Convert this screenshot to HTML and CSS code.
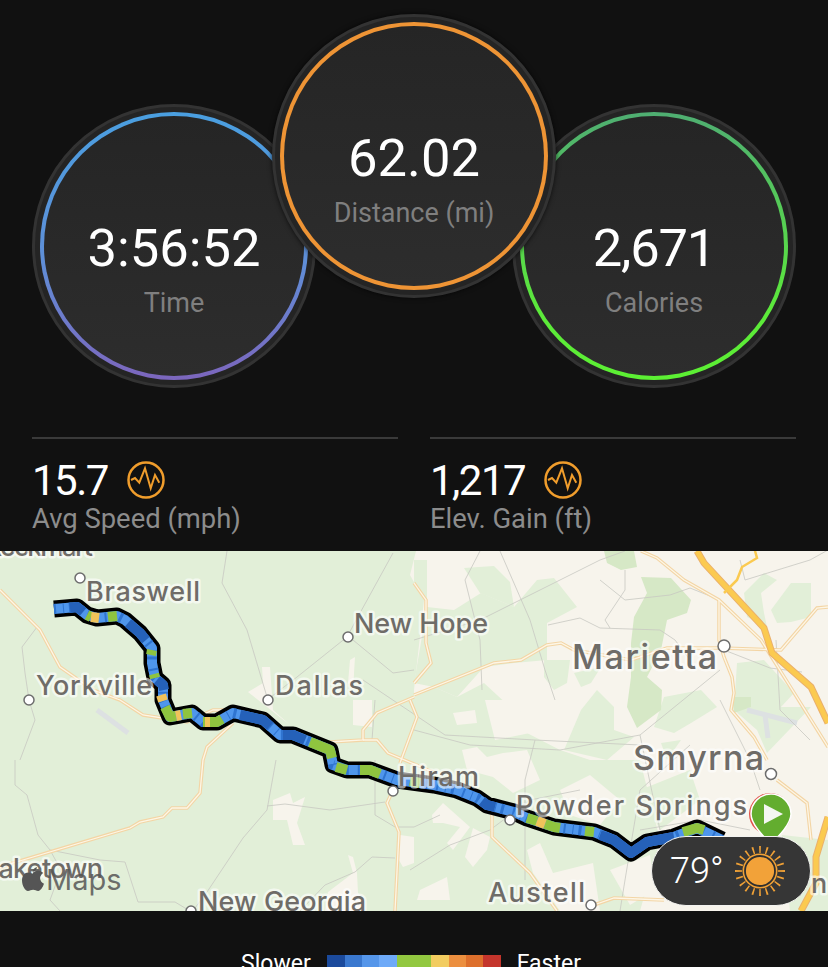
FILE: index.html
```html
<!DOCTYPE html>
<html lang="en">

<head>
    <meta charset="UTF-8">
    <meta name="viewport" content="width=device-width, initial-scale=1.0">
    <title>Ride Summary</title>
    <link rel="stylesheet" href="styles.css">
</head>

<body>
    <div class="gauges">
        <div class="gauge gauge-side">
            <div class="gauge-ring ring-time">
                <div class="gauge-inner">
                    <div class="gauge-value">3:56:52</div>
                    <div class="gauge-label">Time</div>
                </div>
            </div>
        </div>
        <div class="gauge gauge-main">
            <div class="gauge-ring ring-distance">
                <div class="gauge-inner">
                    <div class="gauge-value">62.02</div>
                    <div class="gauge-label">Distance (mi)</div>
                </div>
            </div>
        </div>
        <div class="gauge gauge-side">
            <div class="gauge-ring ring-calories">
                <div class="gauge-inner">
                    <div class="gauge-value value-tight">2,671</div>
                    <div class="gauge-label">Calories</div>
                </div>
            </div>
        </div>
    </div>

    <div class="stats">
        <div class="stat">
            <div class="stat-row">
                <span class="stat-value">15.7</span>
                <svg class="pulse" viewBox="0 0 38 38">
                    <circle cx="19" cy="19" r="17.5"></circle>
                    <polyline points="4,19 8,17 12.3,21.7 18,7.3 23.7,27.3 28,14 32.3,21.7"></polyline>
                </svg>
            </div>
            <div class="stat-label">Avg Speed (mph)</div>
        </div>
        <div class="stat">
            <div class="stat-row">
                <span class="stat-value">1,217</span>
                <svg class="pulse" viewBox="0 0 38 38">
                    <circle cx="19" cy="19" r="17.5"></circle>
                    <polyline points="4,19 8,17 12.3,21.7 18,7.3 23.7,27.3 28,14 32.3,21.7"></polyline>
                </svg>
            </div>
            <div class="stat-label">Elev. Gain (ft)</div>
        </div>
    </div>

    <div class="map">
        <svg class="map-svg" viewBox="0 551 828 360">
            <!-- land -->
            <rect class="land" x="0" y="551" width="828" height="360"></rect>
            <polygon class="green" points="0,551 416,551 410,575 424,600 414,690 414,911 0,911"></polygon>
            <polygon class="green" points="414,560 427,560 427,603 414,590"></polygon>
            <polygon class="green" points="427,607 454,610 481,593 514,607 537,580 554,578 577,607 547,623 547,660 514,663 484,667 457,697 434,687 414,683"></polygon>
            <polygon class="green" points="464,568 494,566 510,582 514,607 480,593"></polygon>
            <polygon class="green" points="414,697 434,687 457,697 484,683 510,707 527,733 560,750 590,760 640,760 660,840 640,911 414,911"></polygon>
            <polygon class="green" points="544,660 570,660 567,683 554,690 544,677"></polygon>
            <polygon class="green" points="574,673 601,667 591,683 581,687"></polygon>
            <polygon class="green" points="597,690 614,707 614,730 634,737 607,760 564,750 581,710"></polygon>
            <polygon class="green" points="664,697 701,690 717,707 691,723 674,733 654,727"></polygon>
            <polygon class="green" points="661,743 681,740 667,760"></polygon>
            <polygon class="green" points="744,593 764,573 777,580 761,593 764,613 767,627 747,617"></polygon>
            <polygon class="green" points="771,610 791,583 811,583 811,617 791,622 777,623"></polygon>
            <polygon class="green" points="737,663 764,660 794,693 781,707 811,707 767,753 757,730 734,710"></polygon>
            <polygon class="green" points="782,835 828,840 828,911 790,911"></polygon>
            <polygon class="green" points="640,790 690,770 700,800 660,830"></polygon>

            <polygon class="cream" points="262,667 270,667 273,710 290,725 267,707 248,692 263,683"></polygon>
            <polygon class="cream" points="350,660 355,657 353,690 348,683"></polygon>
            <polygon class="cream" points="353,700 372,700 372,727 353,725"></polygon>
            <polygon class="cream" points="273,800 290,793 293,803 305,797 297,823 305,845 293,845 287,820 273,820"></polygon>
            <polygon class="cream" points="348,855 353,857 357,873 358,893 365,900 365,911 325,911 328,892 353,873"></polygon>
            <polygon class="cream" points="400,835 414,837 414,863 403,867 397,857"></polygon>
            <polygon class="cream" points="453,713 475,710 477,723 457,725"></polygon>
            <polygon class="cream" points="462,750 477,747 487,757 503,753 527,750 540,780 513,793 493,777 467,770"></polygon>
            <polygon class="cream" points="432,815 443,803 470,827 453,850 447,843 460,827 443,823 433,823"></polygon>
            <polygon class="cream" points="465,857 473,828 490,837 487,850 473,867"></polygon>
            <polygon class="cream" points="420,890 447,877 450,900 417,900"></polygon>
            <polygon class="cream" points="527,850 540,843 553,873 593,863 600,911 560,911 533,873"></polygon>
            <polygon class="cream" points="485,700 515,700 530,733 495,740"></polygon>
            <polygon class="cream" points="560,790 590,775 620,800 600,825 570,815"></polygon>
            <polygon class="cream" points="610,870 650,855 655,890 630,905"></polygon>

            <polygon class="park" points="634,617 647,593 641,577 671,578 691,600 687,613 667,620 661,650 647,677 662,690 661,710 637,728 627,707 631,677 631,643"></polygon>
            <polygon class="park" points="604,551 634,551 637,567 621,570 607,563"></polygon>
            <polygon class="park" points="732,697 751,697 751,707 734,713"></polygon>

            <line class="strip" x1="97" y1="710" x2="128" y2="733"></line>
            <line class="strip" x1="747" y1="710" x2="797" y2="723"></line>
            <line class="strip" x1="765" y1="715" x2="768" y2="738"></line>

            <!-- local roads -->
            <g class="lane">
                <polyline points="227,551 222,583 247,630 267,697"></polyline>
                <polyline points="393,553 360,613 347,637 297,677 267,700"></polyline>
                <polyline points="353,640 393,673 414,670"></polyline>
                <polyline points="37,627 22,647 25,673 29,700 35,720 20,760"></polyline>
                <polyline points="15,760 15,785 27,795 38,835 50,850 61,870 50,900 60,911"></polyline>
                <polyline points="50,850 100,860 125,862 138,902 175,902 190,911"></polyline>
                <polyline points="276,760 267,810 243,838 207,892 195,908"></polyline>
                <polyline points="267,806 285,804 330,810 385,802"></polyline>
                <polyline points="375,760 375,815 395,827 414,827 440,815"></polyline>
                <polyline points="375,700 372,740"></polyline>
                <polyline points="363,680 445,735 535,740 640,745"></polyline>
                <polyline points="535,740 525,780 525,880"></polyline>
                <polyline points="300,911 325,885 355,872 372,857 395,858"></polyline>
                <polyline points="414,640 480,620 540,590 600,560 625,551"></polyline>
                <polyline points="500,551 530,620 545,670 555,700"></polyline>
                <polyline points="480,551 465,580 470,600 480,640 482,690"></polyline>
                <polyline points="548,625 580,618 600,628 660,630 675,640 690,660"></polyline>
                <polyline points="600,580 625,600 670,595 690,588 720,600"></polyline>
                <polyline points="610,628 605,620 625,590 625,570"></polyline>
                <polyline points="414,730 470,745 560,750 640,735 720,670"></polyline>
                <polyline points="640,735 660,830"></polyline>
                <polyline points="690,745 640,790 625,880 620,911"></polyline>
                <polyline points="720,700 750,760 760,790"></polyline>
                <polyline points="724,650 770,668 802,672"></polyline>
                <polyline points="740,560 745,580 810,560 828,550"></polyline>
                <polyline points="776,640 780,710 810,740"></polyline>
                <polyline points="640,830 700,820 750,830"></polyline>
                <polyline points="410,870 450,845 490,830 530,800 580,790"></polyline>
            </g>

            <!-- main roads -->
            <g class="road-edge">
                <polyline points="0,590 40,630 60,667 93,690 120,700 143,715 187,722 213,710 233,710"></polyline>
                <polyline points="233,723 207,747 203,760 200,793 187,808 172,808 163,817 140,822 130,828 13,863 0,868"></polyline>
                <polyline points="414,697 377,713 363,730 363,740 330,742"></polyline>
                <polyline points="363,740 377,740 388,753 433,772"></polyline>
                <polyline points="410,700 417,717 400,763"></polyline>
                <polyline points="393,790 387,803 399,832 395,911"></polyline>
                <polyline points="492,810 492,837 530,873 557,911"></polyline>
                <polyline points="414,583 426,600 426,643 431,663 414,683"></polyline>
                <polyline points="414,695 494,663 521,660 547,645 561,643 574,650 631,660 667,648 721,648 781,650 817,608 828,607"></polyline>
                <polyline points="641,551 657,558 684,580 719,600 761,640 828,747"></polyline>
                <polyline points="719,600 719,640 724,657 732,677 734,693 731,710 754,737 767,760"></polyline>
                <polyline points="777,780 807,803 811,840"></polyline>
                <polyline points="591,906 614,898 664,900"></polyline>
            </g>
            <g class="road-fill">
                <polyline points="0,590 40,630 60,667 93,690 120,700 143,715 187,722 213,710 233,710"></polyline>
                <polyline points="233,723 207,747 203,760 200,793 187,808 172,808 163,817 140,822 130,828 13,863 0,868"></polyline>
                <polyline points="414,697 377,713 363,730 363,740 330,742"></polyline>
                <polyline points="363,740 377,740 388,753 433,772"></polyline>
                <polyline points="410,700 417,717 400,763"></polyline>
                <polyline points="393,790 387,803 399,832 395,911"></polyline>
                <polyline points="492,810 492,837 530,873 557,911"></polyline>
                <polyline points="414,583 426,600 426,643 431,663 414,683"></polyline>
                <polyline points="414,695 494,663 521,660 547,645 561,643 574,650 631,660 667,648 721,648 781,650 817,608 828,607"></polyline>
                <polyline points="641,551 657,558 684,580 719,600 761,640 828,747"></polyline>
                <polyline points="719,600 719,640 724,657 732,677 734,693 731,710 754,737 767,760"></polyline>
                <polyline points="777,780 807,803 811,840"></polyline>
                <polyline points="591,906 614,898 664,900"></polyline>
            </g>

            <!-- highway -->
            <g class="highway-edge">
                <polyline points="697,551 704,563 764,628 772,653 811,687 828,723"></polyline>
                <polyline points="828,817 816,857 816,883 801,911"></polyline>
            </g>
            <g class="highway-fill">
                <polyline points="697,551 704,563 764,628 772,653 811,687 828,723"></polyline>
                <polyline points="828,817 816,857 816,883 801,911"></polyline>
                <polyline class="ramp" points="724,593 737,580 742,567 757,558 755,551"></polyline>
            </g>

            <!-- route -->
            <polyline class="route-line" points="54,609 77,607 87,615 97,618 117,616 125,620 140,633 152,648 152,663 155,678 163,685 163,700 170,717 192,713 203,722 217,722 233,713 263,720 280,735 293,735 330,750 333,765 347,770 370,770 397,780 434,785 457,790 477,798 487,805 514,812 527,818 554,827 594,832 614,840 631,853 647,842 674,837 697,828 722,840"></polyline>
            <polyline class="route-blue" points="54,609 77,607 87,615 97,618 117,616 125,620 140,633 152,648 152,663 155,678 163,685 163,700 170,717 192,713 203,722 217,722 233,713 263,720 280,735 293,735 330,750 333,765 347,770 370,770 397,780 434,785 457,790 477,798 487,805 514,812 527,818 554,827 594,832 614,840 631,853 647,842 674,837 697,828 722,840"></polyline>
            <polyline class="route-bands" points="54,609 77,607 87,615 97,618 117,616 125,620 140,633 152,648 152,663 155,678 163,685 163,700 170,717 192,713 203,722 217,722 233,713 263,720 280,735 293,735 330,750 333,765 347,770 370,770 397,780 434,785 457,790 477,798 487,805 514,812 527,818 554,827 594,832 614,840 631,853 647,842 674,837 697,828 722,840"></polyline>
            <g class="route-dark">
                <polyline points="70,608 77,607 83,612"></polyline>
                <polyline points="128,623 140,633 146,640"></polyline>
                <polyline points="157,680 163,685 164,690"></polyline>
                <polyline points="240,715 263,720 270,726"></polyline>
                <polyline points="283,735 293,735 305,740"></polyline>
                <polyline points="482,801 487,805 495,807"></polyline>
                <polyline points="600,835 614,840 631,853 647,842 674,837"></polyline>
            </g>
            <g class="route-green">
                <polyline points="87,615 91,617"></polyline>
                <polyline points="108,617 117,616"></polyline>
                <polyline points="151,655 152,650"></polyline>
                <polyline points="154,674 155,678"></polyline>
                <polyline points="165,707 170,717 176,716"></polyline>
                <polyline points="183,714 192,713"></polyline>
                <polyline points="203,722 217,722 222,719"></polyline>
                <polyline points="310,742 330,750 332,758"></polyline>
                <polyline points="336,767 347,770"></polyline>
                <polyline points="360,770 370,770 380,774"></polyline>
                <polyline points="410,781 420,783"></polyline>
                <polyline points="527,818 537,821"></polyline>
                <polyline points="545,824 554,827 560,828"></polyline>
                <polyline points="585,831 594,832"></polyline>
                <polyline points="683,832 697,828 704,830"></polyline>
            </g>
            <g class="route-yellow">
                <polyline points="91,617 99,618"></polyline>
                <polyline points="161,695 163,701"></polyline>
                <polyline points="176,716 181,715"></polyline>
                <polyline points="205,722 210,722"></polyline>
                <polyline points="537,821 545,824"></polyline>
            </g>

            <!-- places -->
            <g class="dots">
                <circle cx="80" cy="578" r="5"></circle>
                <circle cx="348" cy="637" r="5"></circle>
                <circle cx="29" cy="700" r="5"></circle>
                <circle cx="268" cy="700" r="5"></circle>
                <circle cx="724" cy="646" r="6"></circle>
                <circle cx="771" cy="774" r="5.5"></circle>
                <circle cx="393" cy="791" r="5"></circle>
                <circle cx="510" cy="820" r="5"></circle>
                <circle cx="591" cy="905" r="5"></circle>
                <circle cx="191" cy="911" r="5"></circle>
            </g>
            <g class="places">
                <text x="-15" y="556" textLength="108">Rockmart</text>
                <text x="86" y="601" textLength="114">Braswell</text>
                <text x="354" y="633" textLength="134">New Hope</text>
                <text x="36" y="695" textLength="116">Yorkville</text>
                <text x="275" y="695" textLength="88">Dallas</text>
                <text class="city" x="572" y="669" textLength="145">Marietta</text>
                <text class="city" x="633" y="770" textLength="131">Smyrna</text>
                <text x="398" y="786" textLength="81">Hiram</text>
                <text x="516" y="815" textLength="231">Powder Springs</text>
                <text x="-16" y="878" textLength="119">Laketown</text>
                <text x="198" y="911" textLength="168">New Georgia</text>
                <text x="488" y="902" textLength="97">Austell</text>
                <text x="811" y="893">n</text>
            </g>

            <!-- apple maps mark -->
            <path class="legal" d="M37 867c-2.400.7-4.200 2.500-4.300 4.800 2.200-.2 4.100-2.400 4.300-4.800zM33 873.500c-1.700 0-3-1.100-4.800-1.100-3.500 0-6.200 3-6.200 8 0 4.700 3.100 10.600 6 10.600 1.800 0 3-1.200 5.100-1.200s3.200 1.200 5.100 1.200c2.300 0 4.500-3.600 5.800-7.200-2.400-1.100-3.900-3.100-3.900-5.700 0-2.300 1.200-4.100 3.100-5.200-1.400-1.700-3.300-2.500-5.200-2.500-1.800 0-3.500 1.400-5 2.100z"></path>
            <text class="legal-text" x="46" y="890">Maps</text>

            <!-- start pin -->
            <circle class="pin-back" cx="770" cy="814" r="21"></circle>
            <path class="pin" d="M771 794c-11 0-20 9-20 20 0 10 12 22 20 30 8-8 20-20 20-30 0-11-9-20-20-20z"></path>
            <polygon class="pin-play" points="764,804 783,814 764,824"></polygon>
        </svg>

        <div class="weather">
            <span class="weather-temp">79°</span>
            <svg class="sun" viewBox="0 0 52 52">
                <circle class="sun-rays" cx="26" cy="26" r="21.500" pathLength="200"></circle>
                <circle class="sun-halo" cx="26" cy="26" r="17.500"></circle>
                <circle class="sun-disc" cx="26" cy="26" r="15"></circle>
            </svg>
        </div>
    </div>

    <div class="legend">
        <span class="legend-label">Slower</span>
        <div class="legend-bar">
            <i class="sw sw1"></i>
            <i class="sw sw2"></i>
            <i class="sw sw3"></i>
            <i class="sw sw4"></i>
            <i class="sw sw5"></i>
            <i class="sw sw6"></i>
            <i class="sw sw7"></i>
            <i class="sw sw8"></i>
            <i class="sw sw9"></i>
        </div>
        <span class="legend-label">Faster</span>
    </div>
</body>
</html>
```

FILE: styles.css
```css
html, body {
    height: 967px;
    overflow: hidden;
}

body {
    font-family: Roboto, "Liberation Sans", sans-serif;
    background-color: #111111;
    color: #fff;
    margin: 0;
}

/* gauges */
.gauges {
    display: flex;
    justify-content: center;
    align-items: flex-start;
    height: 437px;
    padding-top: 14px;
    box-sizing: border-box;
}

.gauge {
    width: 284px;
    height: 284px;
    flex: none;
    box-sizing: border-box;
    border-radius: 50%;
    border: 3px solid #333333;
    padding: 5px;
    background: #242424;
}

.gauge-side {
    margin-top: 90px;
}

.gauge-main {
    position: relative;
    z-index: 1;
    margin: 0 -44px;
    box-shadow: 0 0 5px rgba(0, 0, 0, 0.7);
}

.gauge-ring {
    height: 100%;
    box-sizing: border-box;
    border-radius: 50%;
    padding: 4px;
}

.ring-time {
    background: linear-gradient(#4a9fe0, #5f8fd8 55%, #7c66bd);
}

.ring-distance {
    background: #ee9435;
}

.ring-calories {
    background: linear-gradient(#4fae72, #5cea3a 75%, #5cf033);
}

.gauge-inner {
    height: 100%;
    box-sizing: border-box;
    padding-top: 43px;
    border-radius: 50%;
    background: linear-gradient(#252525, #2d2d2d);
    display: flex;
    flex-direction: column;
    align-items: center;
    justify-content: center;
}

.gauge-value {
    font-size: 52.5px;
    line-height: 60px;
}

.value-tight {
    letter-spacing: -1.200px;
}

.gauge-label {
    font-size: 27px;
    line-height: 30px;
    margin-top: 10px;
    color: #7f7f7f;
}

/* stats under the gauges */
.stats {
    display: grid;
    grid-template-columns: 366px 366px;
    column-gap: 32px;
    padding: 0 32px;
    height: 114px;
}

.stat {
    border-top: 2px solid #3a3a3a;
    padding-top: 19px;
}

.stat-row {
    display: flex;
    align-items: center;
    gap: 19px;
    height: 44px;
}

.stat-value {
    font-size: 42px;
    letter-spacing: -1.500px;
}

.pulse {
    width: 38px;
    height: 38px;
    fill: none;
    stroke: #f09d2c;
    stroke-width: 2.500;
}

.pulse polyline {
    stroke-width: 2;
    stroke-linejoin: miter;
}

.stat-label {
    font-size: 27.4px;
    line-height: 30px;
    margin-top: 2px;
    color: #8c8c8c;
}

/* map */
.map {
    position: relative;
    height: 360px;
    overflow: hidden;
}

.map-svg {
    display: block;
    width: 828px;
    height: 360px;
}

.land { fill: #f7f4ec; }
.green { fill: #e2efd8; }
.cream { fill: #f7f4ec; }
.park { fill: #d6e8c6; }

.strip {
    stroke: #dde1e2;
    stroke-width: 5;
}

.lane polyline {
    fill: none;
    stroke: #c8c8c2;
    stroke-width: 0.800;
}

.road-edge polyline {
    fill: none;
    stroke: #f3d5a5;
    stroke-width: 3.500;
}

.road-fill polyline {
    fill: none;
    stroke: #fdf6e6;
    stroke-width: 1.300;
}

.highway-edge polyline {
    fill: none;
    stroke: #eab06c;
    stroke-width: 7;
}

.highway-fill polyline {
    fill: none;
    stroke: #fbca50;
    stroke-width: 5;
}

.highway-fill .ramp {
    stroke-width: 2.500;
}

.route-line {
    fill: none;
    stroke: #000;
    stroke-width: 17;
    stroke-linejoin: round;
}

.route-blue {
    fill: none;
    stroke: #4f96ec;
    stroke-width: 10;
    stroke-linejoin: round;
}

.route-bands {
    fill: none;
    stroke: #2f74d0;
    stroke-width: 10;
    stroke-dasharray: 2 7 1 5 3 9;
}

.route-dark polyline,
.route-green polyline,
.route-yellow polyline {
    fill: none;
    stroke-width: 10;
    stroke-linejoin: round;
}

.route-dark polyline { stroke: #2561b9; }
.route-green polyline { stroke: #8fc43f; }
.route-yellow polyline { stroke: #f0c35a; }

.dots circle {
    fill: #fff;
    stroke: #6d6d6d;
    stroke-width: 1.500;
}

.places text {
    font-family: Inter, sans-serif;
    font-size: 27px;
    font-weight: 500;
    fill: #6f6c68;
    stroke: rgba(255, 255, 255, 0.6);
    stroke-width: 5px;
    stroke-linejoin: round;
    paint-order: stroke;
}

.places .city {
    font-size: 34px;
}

.legal {
    fill: #555555;
}

.legal-text {
    font-family: Inter, sans-serif;
    font-size: 29px;
    fill: #555555;
    fill-opacity: 0.85;
}

.pin-back {
    fill: #e0524a;
}

.pin {
    fill: #63ad2f;
    stroke: #fff;
    stroke-width: 1.500;
}

.pin-play {
    fill: #f4f6f2;
}

.weather {
    position: absolute;
    left: 651px;
    top: 285px;
    width: 160px;
    height: 70px;
    box-sizing: border-box;
    border-radius: 35px;
    border: 1px solid #f3f3f0;
    background: #363636;
    display: flex;
    align-items: center;
    padding-left: 18px;
}

.weather-temp {
    font-size: 36px;
    font-weight: 300;
    width: 64px;
}

.sun {
    width: 52px;
    height: 52px;
    fill: none;
}

.sun-rays {
    stroke: #f0a136;
    stroke-width: 7;
    stroke-dasharray: 2.400 7.600;
    stroke-dashoffset: 1.200;
}

.sun-halo {
    fill: #f0a136;
}

.sun-disc {
    fill: #f2a239;
    stroke: #2f2f2f;
    stroke-width: 1.800;
}

/* speed legend */
.legend {
    display: flex;
    justify-content: center;
    align-items: flex-start;
    padding-top: 44px;
    padding-right: 6px;
    gap: 16px;
}

.legend-label {
    font-size: 23px;
    line-height: 23px;
    margin-top: -3px;
}

.legend-bar {
    display: flex;
    height: 20px;
}

.sw { display: block; height: 20px; width: 17px; }
.sw1 { width: 18px; background: #1b4a9c; }
.sw2 { background: #3a78cf; }
.sw3 { background: #5596ea; }
.sw4 { width: 18px; background: #6eaaf8; }
.sw5 { width: 34px; background: #92c840; }
.sw6 { width: 18px; background: #f2cc60; }
.sw7 { background: #ec8f3f; }
.sw8 { background: #dd6f2c; }
.sw9 { width: 18px; background: #c4352c; }
```
